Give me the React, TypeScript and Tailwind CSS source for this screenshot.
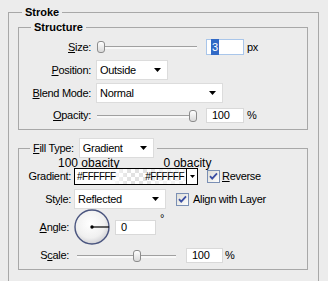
import React from "react";

const Arrow = () => (
    <svg width="7" height="4" viewBox="0 0 7 4">
        <path d="M0 0h7L3.5 4z" fill="#000" />
    </svg>
);

const Select = ({ value, className }: { value: string; className: string }) => (
    <div className={`flex h-[20px] items-center justify-between border border-[#dcdcdc] bg-white pl-[3px] pr-[6px] ${className}`}>
        <span>{value}</span>
        <Arrow />
    </div>
);

const Field = ({ value, className }: { value: string; className: string }) => (
    <div className={`flex h-[15px] items-center border border-[#d9d9d9] bg-white pl-[5px] ${className}`}>{value}</div>
);

const Slider = ({ className, thumb }: { className: string; thumb: string }) => (
    <div className={`relative h-[12px] ${className}`}>
        <div className="absolute left-0 right-0 top-[5px] h-[3px] border-t border-[#a0a0a0] bg-[#f8f8f8]" />
        <div className={`absolute top-0 h-[12px] w-[8px] rounded-[3px] border border-[#8c8c8c] bg-[linear-gradient(#ffffff,#d9d9d9)] ${thumb}`} />
    </div>
);

const Check = () => (
    <svg width="13" height="13" viewBox="0 0 13 13">
        <defs>
            <linearGradient id="cb" x1="0" y1="0" x2="1" y2="1">
                <stop offset="0" stopColor="#dcdcd6" />
                <stop offset="1" stopColor="#ffffff" />
            </linearGradient>
        </defs>
        <rect x="0.5" y="0.5" width="12" height="12" fill="url(#cb)" stroke="#7a8fb4" />
        <path d="M3 6.2l2.2 2.4L10 3.4" fill="none" stroke="#3b4fa3" strokeWidth="1.8" />
    </svg>
);

const Dial = () => (
    <svg width="36" height="36" viewBox="0 0 36 36">
        <defs>
            <radialGradient id="dial" cx="0.45" cy="0.4" r="0.6">
                <stop offset="0" stopColor="#ffffff" />
                <stop offset="0.7" stopColor="#f0f0f0" />
                <stop offset="1" stopColor="#d2d2d6" />
            </radialGradient>
        </defs>
        <circle cx="18" cy="18" r="17" fill="url(#dial)" stroke="#4a557f" strokeWidth="1.4" />
        <line x1="18" y1="18" x2="35" y2="18" stroke="#000" strokeWidth="1.2" />
        <circle cx="18" cy="18" r="1.7" fill="#000" />
    </svg>
);

const U = ({ children }: { children: string }) => <span className="underline underline-offset-[1px]">{children}</span>;

const App = () => {
    return (
        <div className="h-[281px] w-[328px] overflow-hidden bg-[#ececec] text-[11px] text-black [font-family:'Liberation_Sans',Arial,sans-serif]">
            <fieldset className="ml-[8px] mt-[6px] w-[311px] border border-[#a8a8a8] pb-[12px]">
                <legend className="ml-[13px] px-[3px] font-bold leading-[13px]">Stroke</legend>
                <div className="pl-[9px] pt-[2px]">
                    {/* Structure group */}
                    <fieldset className="w-[290px] border border-[#a8a8a8] pb-[6px]">
                        <legend className="ml-[12px] px-[3px] font-bold leading-[13px]">Structure</legend>
                        <div className="tracking-[-0.3px]">
                            <div className="mt-[5px] flex h-[16px] items-center">
                                <span className="w-[72px] text-right"><U>S</U>ize:</span>
                                <Slider className="ml-[6px] w-[100px]" thumb="left-0" />
                                <div className="ml-[9px] flex h-[16px] w-[38px] items-center border border-[#a9c6ea] bg-white pl-[4px]">
                                    <span className="bg-[#3169c6] px-[1px] text-white">3</span>
                                </div>
                                <span className="ml-[3px]">px</span>
                            </div>
                            <div className="mt-[5px] flex h-[20px] items-center">
                                <span className="w-[72px] text-right"><U>P</U>osition:</span>
                                <Select value="Outside" className="ml-[5px] w-[72px]" />
                            </div>
                            <div className="mt-[3px] flex h-[20px] items-center">
                                <span className="w-[72px] text-right"><U>B</U>lend Mode:</span>
                                <Select value="Normal" className="ml-[5px] w-[127px]" />
                            </div>
                            <div className="mt-[5px] flex h-[15px] items-center">
                                <span className="w-[72px] text-right"><U>O</U>pacity:</span>
                                <Slider className="ml-[6px] w-[100px]" thumb="right-0" />
                                <Field value="100" className="ml-[9px] w-[38px]" />
                                <span className="ml-[3px]">%</span>
                            </div>
                        </div>
                    </fieldset>

                    {/* Fill group */}
                    <fieldset className="mt-[8px] w-[290px] border border-[#a8a8a8] pb-[6px]">
                        <legend className="ml-[11px] flex items-center px-[3px] tracking-[-0.3px]">
                            <span><U>F</U>ill Type:</span>
                            <Select value="Gradient" className="ml-[5px] w-[75px]" />
                        </legend>
                        <div className="tracking-[-0.3px]">
                            <div className="flex h-[10px] items-center text-[12px] tracking-normal">
                                <span className="ml-[39px]">100 obacity</span>
                                <span className="ml-[44px]">0 obacity</span>
                            </div>
                            <div className="flex h-[17px] items-center">
                                <span className="w-[52px] text-right">Gradient:</span>
                                <div className="ml-[3px] flex h-[17px] w-[124px] border border-black bg-white">
                                    <div className="flex flex-1 items-center justify-between px-[2px] text-[10px] tracking-[-0.5px] [background:linear-gradient(90deg,#fff_32%,rgba(255,255,255,0)_48%,rgba(255,255,255,0)_62%,rgba(255,255,255,0.6)_80%),repeating-conic-gradient(#e2e2e2_0%_25%,#fff_0%_50%)_0_0/8px_8px]">
                                        <span>#FFFFFF</span>
                                        <span>#FFFFFF</span>
                                    </div>
                                    <div className="flex w-[11px] items-center justify-center border-l border-black">
                                        <svg width="5" height="3" viewBox="0 0 5 3">
                                            <path d="M0 0h5L2.5 3z" fill="#000" />
                                        </svg>
                                    </div>
                                </div>
                                <div className="ml-[9px]"><Check /></div>
                                <span className="ml-[2px]"><U>R</U>everse</span>
                            </div>
                            <div className="mt-[4px] flex h-[20px] items-center">
                                <span className="w-[52px] text-right">St<U>y</U>le:</span>
                                <Select value="Reflected" className="ml-[3px] w-[92px]" />
                                <div className="ml-[10px]"><Check /></div>
                                <span className="ml-[4px]">Ali<U>g</U>n with Layer</span>
                            </div>
                            <div className="flex h-[36px] items-center">
                                <span className="w-[50px] text-right"><U>A</U>ngle:</span>
                                <div className="ml-[5px]"><Dial /></div>
                                <Field value="0" className="ml-[5px] w-[41px]" />
                                <span className="ml-[4px] self-start pt-[1px]">°</span>
                            </div>
                            <div className="mt-[3px] flex h-[15px] items-center">
                                <span className="w-[50px] text-right">S<U>c</U>ale:</span>
                                <Slider className="ml-[8px] w-[99px]" thumb="left-[56px]" />
                                <Field value="100" className="ml-[10px] w-[37px]" />
                                <span className="ml-[2px]">%</span>
                            </div>
                        </div>
                    </fieldset>
                </div>
            </fieldset>
        </div>
    );
};

export default App;
